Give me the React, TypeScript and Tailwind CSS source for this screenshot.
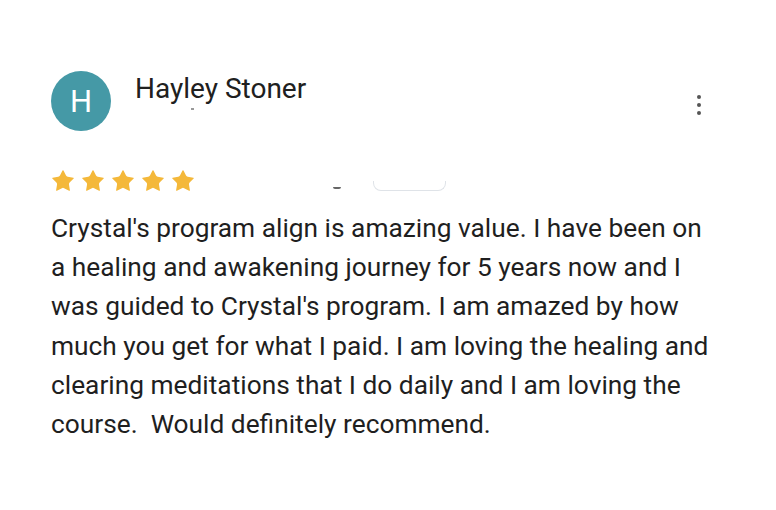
import { Star } from 'lucide-react'

const text = [
    "Crystal's program align is amazing value. I have been on",
    'a healing and awakening journey for 5 years now and I',
    "was guided to Crystal's program. I am amazed by how",
    'much you get for what I paid. I am loving the healing and',
    'clearing meditations that I do daily and I am loving the',
    'course.\u00a0 Would definitely recommend.',
]

export default function App() {
    return (
        <div
            className="w-[776px] h-[510px] bg-white text-[#222] overflow-hidden"
            style={{ fontFamily: 'Roboto, "Liberation Sans", sans-serif' }}
        >
            <div className="pl-[51px] pr-[40px] pt-[71px]">
                <div className="flex items-start">
                    <div className="w-[60px] h-[60px] rounded-full bg-[#4599a6] flex items-center justify-center text-white text-[31px] leading-none">
                        H
                    </div>
                    <div className="ml-[24px] flex-1">
                        <div className="text-[28px] leading-[36px] text-[#202020]">Hayley Stoner</div>
                        <div className="ml-[56px] mt-[1px] w-[3px] h-[2px] bg-[#999]" />
                    </div>
                    <div className="flex flex-col gap-[4px] mt-[24px] mr-[35px]">
                        <span className="w-[4px] h-[4px] rounded-full bg-[#555]" />
                        <span className="w-[4px] h-[4px] rounded-full bg-[#555]" />
                        <span className="w-[4px] h-[4px] rounded-full bg-[#555]" />
                    </div>
                </div>

                <div className="mt-[37px] flex items-center">
                    <div className="flex gap-[4px] -ml-[1px]">
                        {[0, 1, 2, 3, 4].map((i) => (
                            <Star key={i} size={26} strokeWidth={0} fill="#f4b83a" />
                        ))}
                    </div>
                    <div className="ml-[137px] mt-[14px] w-[8px] h-[2px] rounded-b bg-[#666]" />
                    <div className="ml-[32px] mt-[10px] w-[73px] h-[10px] rounded-b-[8px] border-b border-x border-[#dfe3e8]" />
                </div>

                <div className="mt-[15px] text-[26.3px] leading-[39.2px] text-[#1f1f1f] whitespace-nowrap">
                    {text.map((line, i) => (
                        <div key={i}>{line}</div>
                    ))}
                </div>
            </div>
        </div>
    )
}
